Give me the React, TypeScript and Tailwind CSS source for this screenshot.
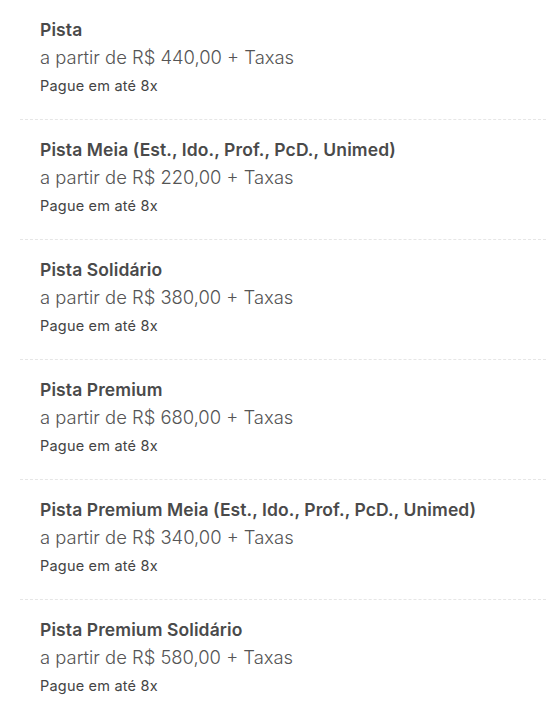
const TICKETS = [
  { name: "Pista", price: "440,00" },
  { name: "Pista Meia (Est., Ido., Prof., PcD., Unimed)", price: "220,00" },
  { name: "Pista Solidário", price: "380,00" },
  { name: "Pista Premium", price: "680,00" },
  { name: "Pista Premium Meia (Est., Ido., Prof., PcD., Unimed)", price: "340,00" },
  { name: "Pista Premium Solidário", price: "580,00" },
];

export default function App() {
  return (
    <div className="min-h-screen bg-white pl-[20px] font-['Inter',sans-serif]">
      {TICKETS.map((t) => (
        <div
          key={t.name}
          className="border-b border-dashed border-[#e6e6e6] pl-[20px] pt-[18px] pb-[19px]"
        >
          <div className="text-[17.5px] leading-[24px] font-semibold text-[#4a4a4a] tracking-[0.1px]">
            {t.name}
          </div>
          <div className="text-[18.4px] leading-[30px] font-light text-[#555]">
            a partir de R$ {t.price} + Taxas
          </div>
          <div className="text-[14.5px] leading-[28px] text-[#444] tracking-[0.2px]">Pague em até 8x</div>
        </div>
      ))}
    </div>
  );
}
